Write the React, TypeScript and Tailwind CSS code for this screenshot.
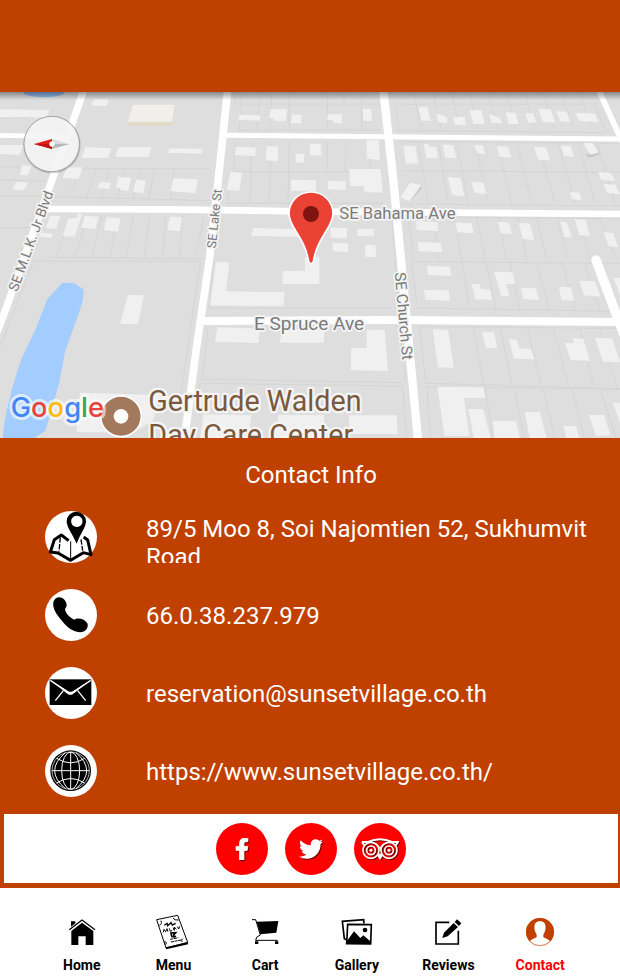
import type { ReactNode } from "react";
import { FaFacebookF, FaTwitter } from "react-icons/fa";

const roads = [
  { d: "M252 30 L140 345 L20 680 L-10 760", w: 22 },
  { d: "M683 30 L650 345 L628 540 L590 800 L553 1080", w: 23 },
  { d: "M0 166 L200 170", w: 14 },
  { d: "M680 166 L1160 170 L1860 177", w: 15 },
  { d: "M140 387 L500 388 L900 394 L1860 402", w: 20 },
  { d: "M1150 30 L1180 300 L1203 540 L1254 1080", w: 25 },
  { d: "M1796 30 L1864 180", w: 17 },
  { d: "M608 723 L1200 720 L1860 726", w: 24 },
  { d: "M1788 540 L1870 760", w: 28 },
];

const lots = [
  "M262 36 L218 150 M246 266 H630 M0 260 L165 262 M0 300 L135 303 M0 347 L120 349 M0 445 L90 443 M0 115 L85 112 M35 195 L20 230 M75 88 L68 112",
  "M246 266 L205 350 M290 268 L258 358 M330 268 L303 360 M376 268 L350 360 M420 268 L398 360 M464 268 L445 360 M522 268 L512 360 M165 350 L636 362",
  "M212 408 L168 535 M262 408 L225 535 M305 408 L275 535 M350 408 L330 535 M400 408 L378 535 M448 408 L432 535 M497 408 L488 535 M545 408 L538 535 M612 410 L588 520 M150 532 L620 536",
  "M705 39 V72 M726 39 L718 150 M782 39 L770 150 M815 39 L810 150 M868 39 V150 M706 72 H1140 M715 150 H1140 M708 185 L700 275 H1145 M758 185 L750 275 M812 185 L808 368 M868 185 L864 368 M694 275 L682 370 H1150 M755 275 L748 370",
  "M982 39 V150 M1032 39 V72 M1085 39 V150 M1110 185 V272 M982 185 V272 M1038 185 L1036 272",
  "M1180 72 H1790 M1183 152 L1820 158 M1195 185 L1855 190 M1205 272 L1860 277 M1215 372 L1860 378 M1220 410 L1860 416",
  "M1185 76 L1198 150 M1242 39 L1265 150 M1300 39 L1325 150 M1355 39 L1380 150 M1410 39 L1435 150 M1465 39 L1495 150 M1520 39 L1548 150 M1575 39 L1605 150 M1630 39 L1665 150 M1685 39 L1720 150 M1740 39 L1775 150 M1780 70 L1820 156",
  "M1255 187 L1285 370 M1315 187 L1345 370 M1370 187 L1405 370 M1425 187 L1465 370 M1490 187 L1535 370 M1550 187 L1595 370 M1615 187 L1665 370 M1675 187 L1725 370 M1735 187 L1785 370 M1790 187 L1845 370",
  "M1225 410 L1240 540 M1300 410 L1315 540 M1365 410 L1385 540 M1430 410 L1455 540 M1495 410 L1520 540 M1555 410 L1580 540 M1610 410 L1640 540 M1670 410 L1705 540 M1735 410 L1770 540 M1795 410 L1850 540",
  "M100 543 H602 L540 960 M100 545 L0 800 M628 684 H1175 M625 740 L606 898 L1205 908 M602 910 L1210 918 M600 914 L590 980 M640 545 L628 684",
  "M1235 545 L1860 550 M1235 545 L1252 684 L1860 694 M1385 545 L1410 684 M1458 545 L1488 688 M1530 548 L1560 688 M1610 548 L1648 690 M1685 548 L1726 690 M1755 550 L1800 692",
  "M1258 740 L1278 910 L1860 926 M1258 740 L1860 745 M1420 742 L1450 910 M1500 742 L1536 912 M1582 742 L1622 915 M1660 742 L1705 918 M1740 745 L1780 918 M1800 745 L1850 920",
  "M1280 920 L1860 928 M1280 920 L1292 1080 M1455 924 L1480 1080 M1542 924 L1575 1080 M1630 924 L1665 1080 M1715 924 L1755 1080 M1800 926 L1850 1080 M1175 410 L1215 900 M1208 920 L1220 1080",
];

const buildings = [
  "M282 58 L326 58 L320 77 L274 77Z", "M0 88 L148 90 L140 112 L0 112Z", "M0 195 L70 195 L60 224 L0 222Z",
  "M256 202 L334 204 L325 234 L244 234Z", "M356 202 L454 202 L446 231 L346 230Z", "M508 205 L606 206 L605 221 L504 218Z",
  "M66 255 L95 258 L82 286 L60 284Z", "M48 305 L84 308 L72 331 L38 328Z", "M200 262 L248 262 L236 297 L188 294Z",
  "M300 306 L332 308 L328 327 L294 324Z", "M355 290 L394 293 L384 333 L360 330 L362 323 L348 321Z", "M408 298 L437 302 L430 340 L400 336Z",
  "M520 295 L594 298 L586 340 L512 333Z", "M150 408 L182 408 L168 446 L138 444Z", "M235 398 L246 402 L224 470 L188 468 L206 415 L232 414Z",
  "M255 407 L296 410 L286 447 L244 443Z", "M320 412 L362 414 L354 455 L312 450Z", "M510 410 L546 412 L540 454 L502 450Z",
  "M120 458 L158 461 L152 474 L116 470Z",
  "M760 444 L900 448 L900 470 L753 468Z", "M718 104 L780 106 L779 122 L716 120Z", "M812 87 L860 88 L858 123 L822 122 L822 115 L808 114Z",
  "M876 103 L905 104 L904 130 L873 129Z", "M708 200 L768 203 L766 228 L704 226Z", "M800 198 L834 200 L834 244 L797 241Z",
  "M888 221 L912 222 L912 248 L886 247Z", "M692 275 L726 278 L718 333 L680 330Z", "M874 299 L948 301 L948 332 L872 332Z",
  "M982 103 H1026 V129 H1000 V120 H982Z", "M1088 86 L1114 88 L1116 123 L1090 122Z", "M930 191 L962 193 L965 227 L930 225Z",
  "M1100 180 L1136 180 L1140 240 L1100 236Z", "M1048 267 L1142 267 L1148 338 L1092 336 V318 H1050Z", "M984 303 L1036 304 L1038 330 L984 328Z",
  "M992 443 H1042 L1040 475 L992 473Z", "M1072 446 L1122 447 L1122 469 L1072 467Z", "M998 489 L1044 490 V517 L998 514Z", "M1096 494 L1127 496 L1128 532 L1096 530Z",
  "M1255 82 L1282 81 L1292 123 L1264 122Z", "M1310 100 L1342 113 L1341 129 L1314 127Z", "M1360 111 L1394 112 L1398 135 L1364 134Z",
  "M1408 90 L1444 91 L1454 133 L1420 131Z", "M1468 101 L1500 115 L1505 130 L1474 128Z", "M1518 97 L1546 98 L1556 133 L1526 131Z",
  "M1576 99 L1600 100 L1608 129 L1584 127Z", "M1614 86 L1652 88 L1666 128 L1628 126Z", "M1668 94 L1700 95 L1712 126 L1682 124Z",
  "M1726 99 L1786 101 L1796 126 L1738 124Z", "M1210 197 L1246 199 L1255 250 L1218 252Z", "M1271 192 L1286 193 L1288 200 L1308 201 L1314 235 L1280 234Z",
  "M1328 194 L1360 196 L1369 234 L1336 233Z", "M1422 195 L1448 196 L1456 222 L1432 220Z", "M1490 199 L1524 200 L1534 233 L1498 230Z",
  "M1602 200 L1638 202 L1650 241 L1614 239Z", "M1682 197 L1712 198 L1723 231 L1692 228Z", "M1344 292 L1382 294 L1393 348 L1356 346Z",
  "M1414 305 L1450 308 L1460 341 L1424 339Z", "M1710 336 L1738 338 L1745 360 L1718 358Z", "M1795 276 L1832 278 L1846 302 L1804 300Z", "M1810 312 L1846 314 L1860 342 L1822 340Z",
  "M1248 424 L1312 426 L1315 454 L1250 450Z", "M1254 486 L1322 488 L1327 517 L1256 514Z", "M1366 428 L1414 430 L1422 460 L1372 457Z",
  "M1494 426 L1528 428 L1536 462 L1502 460Z", "M1556 429 L1590 431 L1602 480 L1568 477Z", "M1680 425 L1700 427 L1716 472 L1694 471Z",
  "M1724 417 L1756 420 L1770 467 L1738 465Z", "M1810 456 L1840 460 L1854 502 L1826 498Z",
  "M648 545 L688 548 L678 634 L854 636 L850 679 L630 676Z", "M848 573 L915 572 V532 L958 530 V612 H847Z", "M384 645 L432 646 L414 733 L360 731Z",
  "M652 742 L780 746 L775 789 L645 785Z", "M845 748 H972 V788 L840 788Z", "M240 938 L480 945 L460 1020 L400 1058 L230 1056Z",
  "M1100 749 L1154 750 L1164 873 L1052 871 L1054 803 L1100 804Z", "M610 1003 L755 1006 L745 1076 H600Z", "M835 1005 H972 V1076 H825Z", "M1046 1006 L1190 1006 L1193 1062 H1050Z",
  "M1281 558 L1350 560 L1353 588 L1284 585Z", "M1272 630 L1346 631 L1350 662 L1276 659Z", "M1415 612 L1438 612 L1444 627 L1470 628 L1476 659 L1426 658Z",
  "M1482 576 L1538 577 L1545 612 L1518 612 L1528 648 L1504 648Z", "M1562 624 L1608 625 L1617 661 L1570 657Z", "M1676 620 L1712 622 L1723 662 L1685 660Z",
  "M1738 602 L1784 604 L1802 650 L1752 646Z", "M1840 594 H1860 V645Z", "M1298 748 L1344 750 L1362 864 L1314 862Z",
  "M1446 756 L1482 757 L1492 805 L1458 803Z", "M1526 777 L1550 779 L1558 805 L1592 806 L1604 838 L1542 836Z", "M1694 788 L1722 790 L1718 774 L1750 776 L1770 843 L1712 840Z",
  "M1784 773 L1836 775 L1860 846 L1810 846Z", "M1312 920 L1450 922 L1456 954 L1392 954 L1408 1068 L1334 1068Z", "M1405 987 L1450 988 L1472 1076 H1422Z",
  "M1478 1022 L1548 1022 L1560 1076 H1484Z", "M1574 996 L1620 997 L1640 1076 H1590Z", "M1690 1038 L1728 1038 L1738 1076 H1700Z", "M1766 1004 L1812 1005 L1832 1066 L1788 1068Z", "M1838 968 H1860 V1030Z",
];

function MapView() {
  return (
    <svg
      className="block h-[346px] w-full font-[Roboto,sans-serif]"
      viewBox="0 36 1860 1038"
      preserveAspectRatio="xMidYMid slice"
      role="img"
      aria-label="Map of the area around SE Bahama Ave"
    >
      <defs>
        <linearGradient id="barShade" x1="0" y1="0" x2="0" y2="1">
          <stop offset="0" stopColor="#000" stopOpacity="0.4" />
          <stop offset="1" stopColor="#000" stopOpacity="0" />
        </linearGradient>
      </defs>
      <rect y="30" width="1860" height="1050" fill="#dedede" />
      <ellipse cx="132" cy="37" rx="62" ry="15" fill="#8fb9ee" />
      <path
        d="M187 609 H222 L250 628 Q254 644 240 690 L195 815 L178 905 L158 980 L136 1052 L100 1076 H8 Q15 980 65 835 L108 745 L142 657Z"
        fill="#a3cdff"
      />
      <path d={lots.join(" ")} stroke="#d0d0d0" strokeWidth="2" fill="none" />
      <path d={buildings.join(" ")} fill="#f0f0f0" />
      <path d="M396 73 L526 73 L519 137 L382 137Z" fill="#e2dac8" />
      <path d="M398 74 L525 74 L516 126 L384 125Z" fill="#f1efeb" />
      <path d="M1230 308 L1264 316 L1228 364 L1202 352Z" fill="#f1f1f1" />
      <path d="M1264 316 V328 L1230 364Z M1758 222 L1796 215 V225 L1766 233Z" fill="#c8c8c8" />
      <path d="M1750 188 L1778 190 L1795 218 L1770 224Z" fill="#f1f1f1" />
      <g fill="none" stroke="#fff" strokeLinejoin="round" strokeLinecap="round">
        {roads.map((road) => (
          <path key={road.d} d={road.d} strokeWidth={road.w} />
        ))}
      </g>

      <g fill="#7b7b7b" stroke="#f4f4f4" strokeWidth="10" strokeLinejoin="round" paintOrder="stroke">
        <text x="1018" y="416" fontSize="50">SE Bahama Ave</text>
        <text x="762" y="749" fontSize="57">E Spruce Ave</text>
        <text transform="translate(647 506) rotate(-84)" fontSize="38">SE Lake St</text>
        <text transform="translate(52 637) rotate(-70)" fontSize="42">SE M.L.K. Jr Blvd</text>
        <text transform="translate(1184 578) rotate(85)" fontSize="46">SE Church St</text>
      </g>
      <g fill="#7b593c" stroke="#f4f4f4" strokeWidth="14" strokeLinejoin="round" paintOrder="stroke" fontSize="86">
        <text x="445" y="993">Gertrude Walden</text>
        <text x="445" y="1095">Day Care Center</text>
      </g>
      <circle cx="363" cy="1009" r="61" fill="#a2795d" stroke="#fff" strokeWidth="5" />
      <circle cx="363" cy="1009" r="22" fill="#fff" />
      <text
        x="32"
        y="1010"
        className="font-[Inter,sans-serif]"
        fontSize="82"
        fontWeight="500"
        stroke="#fff"
        strokeOpacity="0.6"
        strokeWidth="18"
        strokeLinejoin="round"
        paintOrder="stroke"
      >
        <tspan fill="#4285f4">G</tspan>
        <tspan fill="#ea4335">o</tspan>
        <tspan fill="#fbbc05">o</tspan>
        <tspan fill="#4285f4">g</tspan>
        <tspan fill="#34a853">l</tspan>
        <tspan fill="#ea4335">e</tspan>
      </text>

      <path
        d="M933 336 C894 336 867 366 867 402 C867 442 914 470 926 545 Q933 557 940 545 C952 470 999 442 999 402 C999 366 972 336 933 336Z"
        fill="#ea4335"
        stroke="#fff"
        strokeWidth="5"
      />
      <circle cx="933" cy="402" r="24" fill="#7f1310" />

      <circle cx="156" cy="194" r="86" fill="#000" opacity="0.18" />
      <circle cx="155" cy="192" r="83" fill="#f7f7f7" fillOpacity="0.92" stroke="#8f8f8f" strokeWidth="2" />
      <path d="M102 192 L156 177 V207Z" fill="#e21b1b" />
      <path d="M102 192 L156 192 V207Z" fill="#c01212" />
      <path d="M208 192 L156 177 V207Z" fill="#dadada" />
      <path d="M208 192 L156 192 V207Z" fill="#b8b8b8" />
      <circle cx="156" cy="192" r="8" fill="#fff" />
      <rect y="36" width="1860" height="24" fill="url(#barShade)" />
    </svg>
  );
}

function Disc({ children, y }: { children: ReactNode; y: number }) {
  return (
    <svg className="size-[52px] shrink-0" viewBox={`135 ${y} 156 156`} aria-hidden="true">
      <circle cx="213" cy={y + 78} r="78" fill="#fff" />
      {children}
    </svg>
  );
}

const addressIcon = (
  <Disc y={33}>
    <g fill="none" stroke="#000" strokeWidth="9" strokeLinejoin="round">
      <path d="M206 122 L184 105 L163 119 L151 156 L174 159 L212 181 L250 158 L273 164 L263 120 L251 111" />
      <path d="M181 112 L177 155 M243 118 L248 152" strokeWidth="4" strokeDasharray="16 4" />
      <path d="M212 124 V178" strokeWidth="3" />
    </g>
    <path
      fillRule="evenodd"
      d="M229 35 a29 29 0 0 1 29 29 C258 82 242 100 230 131 C216 100 200 82 200 64 a29 29 0 0 1 29 -29Z M230 47 a17 17 0 1 0 1 0Z"
    />
  </Disc>
);

const phoneIcon = (
  <Disc y={267}>
    <path d="M160 307 C163 290 183 287 192 298 C201 309 203 319 195 326 C196 340 208 350 222 359 C232 353 250 353 262 370 C267 382 257 397 240 397 C212 394 198 378 184 360 C170 344 157 326 160 307Z" />
  </Disc>
);

const mailIcon = (
  <Disc y={51}>
    <rect x="149" y="88" width="125" height="77" />
    <path d="M151 91 L206 128 H218 L272 91 M166 152 L190 122 M257 152 L233 122" fill="none" stroke="#fff" strokeWidth="4" />
    <path d="M151 91 L204 133 Q211 136 218 133 L272 91 L216 125 H207Z" fill="#fff" />
  </Disc>
);

const webIcon = (
  <Disc y={283}>
    <circle cx="212" cy="360" r="61" />
    <circle cx="212" cy="360" r="56" fill="none" stroke="#fff" strokeWidth="2" />
    <g fill="none" stroke="#fff" strokeWidth="3">
      <path d="M212 304 V416 M156 360 H268" />
      <ellipse cx="212" cy="360" rx="27" ry="56" />
      <path d="M170 323 Q212 350 254 323 M170 397 Q212 370 254 397" />
      <path d="M196 306 Q132 360 196 414 M228 306 Q292 360 228 414" />
    </g>
  </Disc>
);

const contacts = [
  { icon: addressIcon, text: "89/5 Moo 8, Soi Najomtien 52, Sukhumvit Road" },
  { icon: phoneIcon, text: "66.0.38.237.979", href: "tel:66038237979" },
  { icon: mailIcon, text: "reservation@sunsetvillage.co.th", href: "mailto:reservation@sunsetvillage.co.th" },
  { icon: webIcon, text: "https://www.sunsetvillage.co.th/", href: "https://www.sunsetvillage.co.th/" },
];

function OwlIcon() {
  return (
    <svg className="h-[24px] w-[38px]" viewBox="482 94 114 72" fill="none" stroke="#fff" aria-hidden="true">
      <circle cx="512" cy="134" r="24" strokeWidth="5" />
      <circle cx="566" cy="134" r="24" strokeWidth="5" />
      <circle cx="512" cy="134" r="13" strokeWidth="5" />
      <circle cx="566" cy="134" r="13" strokeWidth="5" />
      <circle cx="512" cy="134" r="4" fill="#fff" />
      <circle cx="566" cy="134" r="4" fill="#fff" />
      <path d="M485 109 H503 Q539 92 575 109 H593 L586 119 M485 109 L492 119" strokeWidth="6" />
      <path d="M531 150 L539 163 L547 150 L539 143Z" fill="#fff" stroke="none" />
      <path d="M512 110 Q536 112 539 132 Q542 112 566 110" strokeWidth="3" />
    </svg>
  );
}

const socials = [
  { name: "Facebook", icon: <FaFacebookF className="size-[22px] stroke-white stroke-[20px]" /> },
  { name: "Twitter", icon: <FaTwitter className="size-[24px]" /> },
  { name: "Tripadvisor", icon: <OwlIcon /> },
];

const tabs = [
  {
    label: "Home",
    box: "72 42 108 108",
    art: (
      <>
        <path d="M93 64 H106 V70 L93 80Z M94 93 L126 68 L160 93 V135 H137 V109 H115 V135 H94Z" />
        <path d="M88 89 L126 60 L165 89" fill="none" stroke="#000" strokeWidth="4" />
      </>
    ),
  },
  {
    label: "Menu",
    box: "348 42 108 108",
    art: (
      <g fill="none" stroke="#000">
        <path d="M353 59 L416 46 L446 127 L381 144Z" strokeWidth="3" />
        <path d="M381 145 L447 130" strokeWidth="6" />
        <path d="M361 76 Q370 73 366 62 M402 54 Q406 62 419 60 M431 116 Q424 120 430 126 M380 134 Q386 126 376 124" strokeWidth="3" />
        <path d="M376 76 L384 70 L386 77 L396 68 L400 75 L410 70" strokeWidth="4" />
        <path d="M373 97 L375 88 L380 95 L384 86 L387 95 M391 85 L394 94 L400 91 M402 83 L406 91 L406 81 L412 88 M415 80 L419 87 L422 79" strokeWidth="3" />
        <path d="M393 99 L410 98 L404 105 L405 111 L411 109 M396 102 L400 112" strokeWidth="5" />
        <path d="M394 118 L418 113 M396 126 L426 120" strokeWidth="3" strokeDasharray="9 2" />
      </g>
    ),
  },
  {
    label: "Cart",
    box: "621 42 108 108",
    art: (
      <>
        <path d="M650 65 L715 63 L709 98 L661 103Z" />
        <path d="M636 59 H647 L661 105 Q646 110 647 121 H713" fill="none" stroke="#000" strokeWidth="3" />
        <path d="M645 124 H655 V132 H645Z M705 124 H715 V132 H705Z" />
      </>
    ),
  },
  {
    label: "Gallery",
    box: "57 42 108 108",
    art: (
      <>
        <path d="M79 119 L73 116 L67 64 L131 59 L132 70" fill="none" stroke="#000" strokeWidth="5" />
        <path d="M83 73 L154 74 L152 132 L80 131Z" fill="#fff" stroke="#000" strokeWidth="5" />
        <path d="M81 123 L102 94 L121 114 L130 106 L151 124 V132 H80Z" />
        <circle cx="135" cy="90" r="7" />
      </>
    ),
  },
  {
    label: "Reviews",
    box: "330 42 108 108",
    art: (
      <>
        <path d="M388 67 H348 V132 H415 V92" fill="none" stroke="#000" strokeWidth="5" />
        <path d="M367 114 L372 98 L401 69 L414 81 L383 109Z M404 66 L411 58 L424 70 L417 78Z" />
      </>
    ),
  },
  {
    label: "Contact",
    box: "606 42 108 108",
    art: (
      <>
        <circle cx="660" cy="96" r="42" fill="#c04000" />
        <path
          d="M660 64 C676 64 678 76 676 90 Q674 98 670 104 V112 Q685 118 692 124 A42 42 0 0 1 628 124 Q638 117 650 112 V104 Q646 98 644 90 C642 76 644 64 660 64Z"
          fill="#fff"
        />
        <circle cx="660" cy="96" r="41" fill="none" stroke="#c04000" strokeWidth="2" />
      </>
    ),
  },
];

export default function App() {
  return (
    <div className="flex min-h-screen flex-col bg-[#c04000] font-[Roboto,sans-serif]">
      <header className="h-[92px] shrink-0" />
      <MapView />

      <main className="flex flex-1 flex-col pt-[23px] text-white">
        <h1 className="pl-0.5 text-center text-2xl leading-[28px]">Contact Info</h1>
        <ul className="mt-[22px] flex flex-col gap-[26px] pr-2 pl-[45px]">
          {contacts.map((item) => (
            <li key={item.text} className="flex h-[52px] gap-[49px]">
              {item.icon}
              <div
                className={`h-[52px] flex-1 overflow-hidden text-2xl leading-[28px] ${
                  item.href ? "flex items-center pt-0.5" : "pt-1"
                }`}
              >
                {item.href ? <a href={item.href}>{item.text}</a> : item.text}
              </div>
            </li>
          ))}
        </ul>
        <div className="mt-[17px] mr-0.5 mb-[5px] ml-1 flex h-[69px] items-center justify-center gap-[17px] bg-white">
          {socials.map((social) => (
            <a
              key={social.name}
              href="#"
              aria-label={social.name}
              className="flex size-[52px] items-center justify-center rounded-full bg-[#fe0000]"
            >
              <span className="drop-shadow-[1px_1px_0px_#700000]">{social.icon}</span>
            </a>
          ))}
        </div>
      </main>

      <nav className="grid h-[88px] shrink-0 grid-cols-6 bg-white pr-[34px] pl-9">
        {tabs.map((tab) => (
          <button
            key={tab.label}
            type="button"
            className={`flex flex-col items-center gap-[7px] pt-[26px] text-sm leading-4 font-bold ${
              tab.label === "Contact" ? "text-[#fe0000]" : "text-black"
            }`}
          >
            <svg className="size-9" viewBox={tab.box} aria-hidden="true">
              {tab.art}
            </svg>
            {tab.label}
          </button>
        ))}
      </nav>
    </div>
  );
}
